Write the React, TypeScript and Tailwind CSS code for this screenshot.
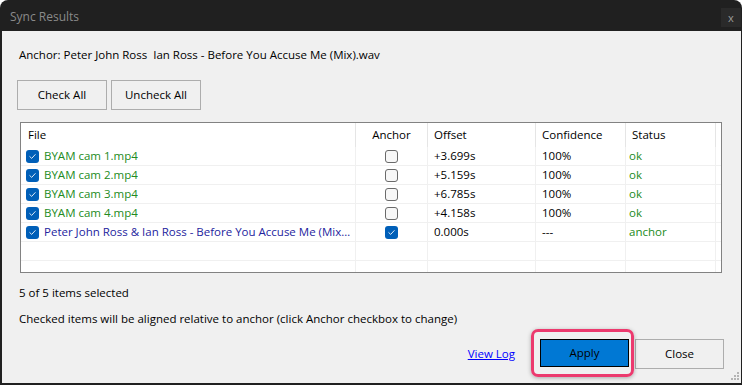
import React from 'react';

type Row = { file: string; anchor: boolean; offset: string; confidence: string; status: string; isAnchor?: boolean };

const rows: Row[] = [
  { file: 'BYAM cam 1.mp4', anchor: false, offset: '+3.699s', confidence: '100%', status: 'ok' },
  { file: 'BYAM cam 2.mp4', anchor: false, offset: '+5.159s', confidence: '100%', status: 'ok' },
  { file: 'BYAM cam 3.mp4', anchor: false, offset: '+6.785s', confidence: '100%', status: 'ok' },
  { file: 'BYAM cam 4.mp4', anchor: false, offset: '+4.158s', confidence: '100%', status: 'ok' },
  {
    file: 'Peter John Ross & Ian Ross - Before You Accuse Me (Mix).wav',
    anchor: true,
    offset: '0.000s',
    confidence: '---',
    status: 'anchor',
    isAnchor: true,
  },
];

const Check: React.FC<{ checked: boolean }> = ({ checked }) =>
  checked ? (
    <div className="flex h-[13px] w-[13px] shrink-0 items-center justify-center rounded-[3px] bg-[#005fb8]">
      <svg width="9" height="9" viewBox="0 0 9 9" fill="none">
        <path d="M1.8 4.6 L3.7 6.4 L7.2 2.6" stroke="#dbe8f5" strokeWidth="1" strokeLinecap="round" strokeLinejoin="round" />
      </svg>
    </div>
  ) : (
    <div className="h-[13px] w-[13px] shrink-0 rounded-[3px] border border-[#6a6a6a] bg-[#f7f7f7]" />
  );

const Grip = () => (
  <svg width="10" height="10" viewBox="0 0 10 10" className="absolute bottom-[2px] right-[2px]">
    {[
      [8, 0],
      [5, 3],
      [8, 3],
      [2, 6],
      [5, 6],
      [8, 6],
    ].map(([x, y], i) => (
      <rect key={i} x={x} y={y + 1} width="2" height="2" fill="#b4b4b4" />
    ))}
  </svg>
);

const cols = 'grid grid-cols-[335px_72px_108px_90px_90px_1fr]';

export default function App() {
  return (
    <div className="flex h-[385px] w-[742px] flex-col overflow-hidden rounded-t-[8px] bg-[#202020] pb-[2px] pl-[2px] pr-px font-['Open_Sans',sans-serif] text-[11.5px] text-black">
      {/* title bar */}
      <div className="flex h-[31px] shrink-0 items-start justify-between">
        <span className="mt-[8px] pl-[8px] text-[12px] text-[#8a8a8a]">Sync Results</span>
        <div className="mt-[8px] flex h-[19px] w-[20px] items-center justify-center bg-[#2a2a2a] text-[11px] leading-none text-[#9a9a9a]">
          x
        </div>
      </div>

      {/* body */}
      <div className="relative flex flex-1 flex-col bg-[#f0f0f0] pl-[15px] pr-[17px] pt-[16px]">
        <div className="ml-[2px] h-[16px] leading-[16px]">
          Anchor: Peter John Ross&nbsp; Ian Ross - Before You Accuse Me (Mix).wav
        </div>

        <div className="mt-[17px] flex gap-[4px]">
          <button className="h-[30px] w-[90px] border border-[#adadad] bg-[#f0f0f0]">Check All</button>
          <button className="h-[30px] w-[90px] border border-[#adadad] bg-[#f0f0f0]">Uncheck All</button>
        </div>

        {/* list view */}
        <div className="ml-[3px] mt-[12px] h-[151px] w-[702px] overflow-hidden border border-[#828282] bg-white">
          <div className={`${cols} h-[24px] items-center`}>
            <div className="h-full border-r border-[#e5e5e5] pl-[7px] leading-[24px]">File</div>
            <div className="h-full border-r border-[#e5e5e5] text-center leading-[24px]">Anchor</div>
            <div className="h-full border-r border-[#e5e5e5] pl-[6px] leading-[24px]">Offset</div>
            <div className="h-full border-r border-[#e5e5e5] pl-[6px] leading-[24px]">Confidence</div>
            <div className="h-full border-r border-[#e5e5e5] pl-[6px] leading-[24px]">Status</div>
            <div />
          </div>
          {rows.map((r) => {
            const color = r.isAnchor ? 'text-[#24249e]' : 'text-[#228b22]';
            return (
              <div key={r.file} className={`${cols} h-[19px] border-b border-[#f0f0f0]`}>
                <div className="flex min-w-0 items-center gap-[5px] border-r border-[#f0f0f0] pl-[5px] pr-[2px]">
                  <Check checked />
                  <span className={`truncate ${color}`}>{r.file}</span>
                </div>
                <div className="flex items-center justify-center border-r border-[#f0f0f0]">
                  <Check checked={r.anchor} />
                </div>
                <div className="flex items-center border-r border-[#f0f0f0] pl-[6px]">{r.offset}</div>
                <div className="flex items-center border-r border-[#f0f0f0] pl-[6px]">{r.confidence}</div>
                <div className="flex items-center border-r border-[#f0f0f0] pl-[3px] text-[#228b22]">{r.status}</div>
                <div />
              </div>
            );
          })}
          {[0, 1].map((i) => (
            <div key={i} className={`${cols} h-[19px] border-b border-[#f0f0f0]`}>
              <div className="border-r border-[#f0f0f0]" />
              <div className="border-r border-[#f0f0f0]" />
              <div className="border-r border-[#f0f0f0]" />
              <div className="border-r border-[#f0f0f0]" />
              <div className="border-r border-[#f0f0f0]" />
              <div />
            </div>
          ))}
        </div>

        <div className="ml-[2px] mt-[12px] h-[16px] leading-[16px]">5 of 5 items selected</div>
        <div className="ml-[2px] mt-[10px] h-[16px] leading-[16px]">
          Checked items will be aligned relative to anchor (click Anchor checkbox to change)
        </div>

        <div className="mt-[12px] flex items-start justify-end">
          <a className="mt-[6px] text-[#0000ff] underline">View Log</a>
          <div className="relative ml-[25px]">
            <div className="pointer-events-none absolute left-[-9px] top-[-10px] h-[48px] w-[103px] rounded-[7px] border-[3px] border-[#ec3a6e] shadow-[0_1px_4px_rgba(0,0,0,0.3)]" />
            <button className="h-[28px] w-[89px] border border-black bg-[#0078d4]">Apply</button>
          </div>
          <button className="ml-[6px] h-[30px] w-[89px] border border-[#adadad] bg-[#f0f0f0]">Close</button>
        </div>

        <Grip />
      </div>
    </div>
  );
}
